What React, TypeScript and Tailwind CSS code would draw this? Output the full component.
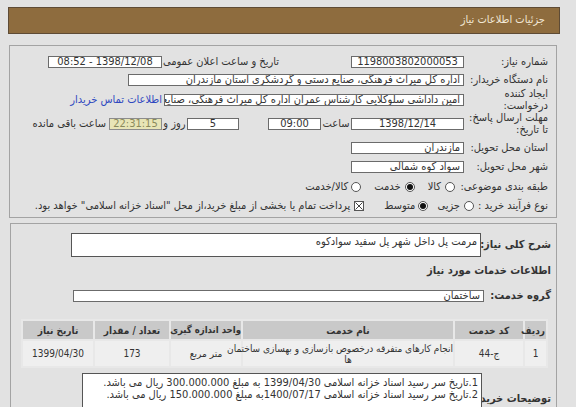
import React from 'react';

function Box({ w, h = 12, center = false, children }: { w: number; h?: number; center?: boolean; children?: React.ReactNode }) {
  return (
    <div
      style={{ width: w, height: h }}
      className={`shrink-0 bg-white border border-[#6b6b6b] overflow-hidden whitespace-nowrap text-[11px] leading-[10px] text-[#333] px-[3px] ${center ? 'text-center' : 'text-right'}`}
    >
      {children}
    </div>
  );
}

function Radio({ checked = false }: { checked?: boolean }) {
  return (
    <span className="shrink-0 w-[10px] h-[10px] rounded-full border border-[#555] bg-white flex items-center justify-center">
      {checked && <span className="w-[6px] h-[6px] rounded-full bg-[#111]" />}
    </span>
  );
}

function Label({ w, bold = false, children }: { w: number; bold?: boolean; children: React.ReactNode }) {
  return (
    <div style={{ width: w }} className={`shrink-0 text-right whitespace-nowrap text-[11px] leading-[12px] text-[#333] ${bold ? 'font-bold' : ''}`}>
      {children}
    </div>
  );
}

export default function App() {
  return (
    <div className="w-[576px] h-[407px] overflow-hidden bg-[#e2e2e2] font-['DejaVu_Sans_Condensed','DejaVu_Sans',sans-serif]">
      <div dir="rtl" className="pt-[7px] ml-[8px] w-[552px]">
        {/* header */}
        <div className="h-[27px] bg-[#8e6c3e] border border-[#5e4b35] flex items-center pr-[14px] text-[11px] text-[#f2e8d6]">
          جزئیات اطلاعات نیاز
        </div>

        {/* first panel */}
        <div className="ml-[1px] mr-[3px] mt-[11px] border border-[#a3a3a3] pr-[8px] pb-[3px]">
          <div className="flex items-center h-[16px] mt-[8px]">
            <Label w={84}>شماره نیاز:</Label>
            <Box w={113} center>1198003802000053</Box>
            <div className="w-[72px] shrink-0" />
            <Label w={117}>تاریخ و ساعت اعلان عمومی:</Label>
            <Box w={114} center>1398/12/08 - 08:52</Box>
          </div>

          <div className="flex items-center h-[16px] mt-[2px]">
            <Label w={84}>نام دستگاه خریدار:</Label>
            <Box w={336}>اداره کل میراث فرهنگی، صنایع دستی و گردشگری استان مازندران</Box>
          </div>

          <div className="flex items-center h-[20px] mt-[2px]">
            <Label w={84}>
              ایجاد کننده
              <br />
              درخواست:
            </Label>
            <Box w={300}>امین داداشی سلوکلایی کارشناس عمران اداره کل میراث فرهنگی، صنایع</Box>
            <span className="mr-[2px] text-[11px] text-[#2f48c0] whitespace-nowrap">اطلاعات تماس خریدار</span>
          </div>

          <div className="flex items-center h-[20px] mt-[4px]">
            <Label w={84}>
              مهلت ارسال پاسخ:
              <br />
              تا تاریخ:
            </Label>
            <Box w={113} center>1398/12/14</Box>
            <div className="w-[30px] shrink-0 text-center text-[11px] text-[#333]">ساعت</div>
            <Box w={53} center>09:00</Box>
            <div className="w-[29px] shrink-0" />
            <Box w={52} center>5</Box>
            <div className="w-[25px] shrink-0 text-center text-[11px] text-[#333] whitespace-nowrap">روز و</div>
            <div className="w-[53px] h-[12px] shrink-0 bg-[#e8e5b6] border border-[#8c8c8c] text-center text-[11px] leading-[10px] text-[#8a8a5c]">22:31:15</div>
            <div className="mr-[3px] text-[11px] text-[#333] whitespace-nowrap">ساعت باقی مانده</div>
          </div>

          <div className="flex items-center h-[16px] mt-[6px]">
            <Label w={84}>استان محل تحویل:</Label>
            <Box w={113}>مازندران</Box>
          </div>

          <div className="flex items-center h-[16px] mt-[3px]">
            <Label w={84}>شهر محل تحویل:</Label>
            <Box w={113}>سواد کوه شمالی</Box>
          </div>

          <div className="flex items-center h-[16px] mt-[4px] text-[11px] text-[#333]">
            <Label w={93}>طبقه بندی موضوعی:</Label>
            <div className="flex items-center gap-[13px]">
              <div className="flex items-center gap-[4px]">
                <Radio />
                <span>کالا</span>
              </div>
              <div className="flex items-center gap-[4px]">
                <Radio checked />
                <span>خدمت</span>
              </div>
              <div className="flex items-center gap-[3px]">
                <Radio />
                <span>کالا/خدمت</span>
              </div>
            </div>
          </div>

          <div className="flex items-center h-[16px] mt-[3px] text-[11px] text-[#333]">
            <Label w={74}>نوع فرآیند خرید :</Label>
            <div className="flex items-center gap-[4px]">
              <Radio />
              <span>جزیی</span>
            </div>
            <div className="flex items-center gap-[3px] mr-[9px]">
              <Radio checked />
              <span>متوسط</span>
            </div>
            <div className="flex items-center gap-[4px] mr-[20px] whitespace-nowrap">
              <span className="shrink-0 w-[10px] h-[10px] border border-[#555] bg-white flex items-center justify-center">
                <svg width="8" height="8" viewBox="0 0 8 8">
                  <path d="M0.5 0.5L7.5 7.5M7.5 0.5L0.5 7.5" stroke="#444" strokeWidth="1" />
                </svg>
              </span>
              <span>پرداخت تمام یا بخشی از مبلغ خرید،از محل "اسناد خزانه اسلامی" خواهد بود.</span>
            </div>
          </div>
        </div>

        {/* second panel */}
        <div className="ml-[2px] mr-[3px] mt-[5px] h-[200px] border border-[#a3a3a3] pr-[5px]">
          <div className="flex items-center mt-[9px]">
            <Label w={70} bold>شرح کلی نیاز:</Label>
            <div className="w-[410px] h-[24px] shrink-0 bg-white border border-[#555] text-right text-[11px] leading-[14px] text-[#333] px-[3px] pt-[1px]">
              مرمت پل داخل شهر پل سفید سوادکوه
            </div>
          </div>

          <div className="mt-[6px] h-[14px] text-right text-[11px] font-bold text-[#333]">اطلاعات خدمات مورد نیاز</div>

          <div className="flex items-center h-[14px] mt-[12px]">
            <Label w={67} bold>گروه خدمت:</Label>
            <Box w={411}>ساختمان</Box>
          </div>

          <div className="mt-[16px] mr-[3px] w-[527px]">
            <table className="w-full border-separate border-spacing-[2px] bg-[#e8e8e8] text-[10px] text-[#333] table-fixed">
              <colgroup>
                <col className="w-[21px]" />
                <col className="w-[68px]" />
                <col className="w-[210px]" />
                <col className="w-[70px]" />
                <col className="w-[74px]" />
                <col />
              </colgroup>
              <thead>
                <tr className="h-[18px]">
                  <th className="bg-[#c9c9c9] font-bold text-center px-[1px]">ردیف</th>
                  <th className="bg-[#c9c9c9] font-bold text-center">کد خدمت</th>
                  <th className="bg-[#c9c9c9] font-bold text-center">نام خدمت</th>
                  <th className="bg-[#c9c9c9] font-bold text-center whitespace-nowrap text-[9.5px]">واحد اندازه گیری</th>
                  <th className="bg-[#c9c9c9] font-bold text-center">تعداد / مقدار</th>
                  <th className="bg-[#c9c9c9] font-bold text-center">تاریخ نیاز</th>
                </tr>
              </thead>
              <tbody>
                <tr className="h-[25px]">
                  <td className="bg-[#efefef] text-center">1</td>
                  <td className="bg-[#efefef] text-center">ج-44</td>
                  <td className="bg-[#efefef] text-center leading-[11px]">
                    <span className="whitespace-nowrap">انجام کارهای متفرقه درخصوص بازسازی و بهسازی ساختمان</span>
                    <br />
                    ها
                  </td>
                  <td className="bg-[#efefef] text-center">متر مربع</td>
                  <td className="bg-[#efefef] text-center">173</td>
                  <td className="bg-[#efefef] text-center">1399/04/30</td>
                </tr>
              </tbody>
            </table>
          </div>

          <div className="flex items-center mt-[5px]">
            <Label w={69} bold>توضیحات خریدار:</Label>
            <div className="w-[400px] h-[52px] shrink-0 bg-white border border-[#555] text-right text-[11px] leading-[12px] text-[#333] px-[3px] pt-[3px]">
              <div className="whitespace-nowrap">1.تاریخ سر رسید اسناد خزانه اسلامی 1399/04/30 به مبلغ 300.000.000 ریال می باشد.</div>
              <div className="whitespace-nowrap">2.تاریخ سر رسید اسناد خزانه اسلامی 1400/07/17به مبلغ 150.000.000 ریال می باشد.</div>
            </div>
          </div>
        </div>
      </div>
    </div>
  );
}
